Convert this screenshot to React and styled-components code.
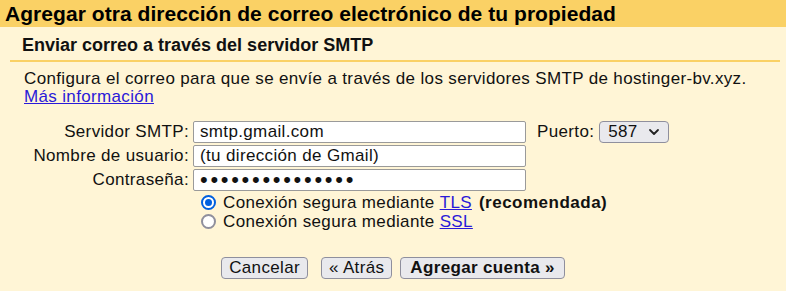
import React from "react"
import styled, { createGlobalStyle } from "styled-components"

const Global = createGlobalStyle`
  html, body {
    margin: 0;
    padding: 0;
    background: #fff5d6;
  }
  body {
    font-family: "Liberation Sans", Arial, sans-serif;
    color: #111;
  }
`

const Page = styled.div`
  width: 786px;
  height: 291px;
  background: #fff5d6;
  overflow: hidden;
  letter-spacing: 0.35px;
`
const TitleBar = styled.div`
  height: 27px;
  padding-left: 5px;
  background: #fad165;
  font-size: 21px;
  font-weight: bold;
  line-height: 27px;
  letter-spacing: 0.05px;
  color: #000;
  white-space: nowrap;
`
const SubTitle = styled.div`
  padding: 9px 0 0 22px;
  height: 24px;
  font-size: 18px;
  font-weight: bold;
  line-height: 18px;
  letter-spacing: 0;
`
const Divider = styled.div`
  height: 2px;
  margin: 0 6px 0 10px;
  background: #fad165;
`
const Intro = styled.p`
  margin: 8px 0 0 24px;
  font-size: 17px;
  line-height: 18px;
`
const Link = styled.a`
  color: #2a1ad8;
  text-decoration: underline;
  cursor: pointer;
`
const Form = styled.div`
  display: grid;
  grid-template-columns: 189px 333px auto;
  column-gap: 4px;
  row-gap: 2px;
  margin-top: 15px;
  font-size: 17px;
  align-items: center;
`
const Label = styled.label`
  text-align: right;
  white-space: nowrap;
  line-height: 22px;
`
const Input = styled.input`
  box-sizing: border-box;
  width: 333px;
  height: 22px;
  margin: 0;
  padding: 0 6px;
  border: 1px solid #9a9a9a;
  border-radius: 2px;
  background: #fff;
  font-family: inherit;
  font-size: ${(p) => (p.type === "password" ? "22px" : "17px")};
  color: #111;
  outline: none;
  letter-spacing: ${(p) => (p.type === "password" ? "2.7px" : "0.35px")};
`
const PortCell = styled.div`
  display: flex;
  align-items: center;
  gap: 5px;
  margin-left: 7px;
`
const Select = styled.div`
  box-sizing: border-box;
  display: flex;
  align-items: center;
  gap: 10px;
  width: 70px;
  height: 22px;
  padding: 0 8px;
  border: 1px solid #8f8f9d;
  border-radius: 4px;
  background: #e9e9ed;
  font-size: 17px;
`
const Radios = styled.div`
  grid-column: 2 / 4;
  margin: 0 0 0 8px;
  font-size: 17px;
`
const RadioRow = styled.div`
  display: flex;
  align-items: center;
  height: 19px;
  white-space: nowrap;
`
const Radio = styled.span`
  box-sizing: border-box;
  width: 15px;
  height: 15px;
  margin-right: 7px;
  border-radius: 50%;
  border: ${(p) => (p.checked ? "2px solid #0060df" : "2px solid #8f8f9d")};
  background: #fff;
  display: inline-flex;
  align-items: center;
  justify-content: center;
  &::after {
    content: "";
    display: ${(p) => (p.checked ? "block" : "none")};
    width: 7px;
    height: 7px;
    border-radius: 50%;
    background: #0060df;
  }
`
const Strong = styled.b`
  margin-left: 7px;
  letter-spacing: 0.5px;
`
const Buttons = styled.div`
  display: flex;
  justify-content: center;
  margin-top: 26px;
`
const Button = styled.button`
  box-sizing: border-box;
  height: 22px;
  margin: 0 ${(p) => p.$gap || 0}px 0 0;
  padding: 0 ${(p) => (p.$bold ? 9 : 7)}px;
  border: 1px solid #8f8f9d;
  border-radius: 4px;
  background: #e9e9ed;
  font-family: inherit;
  font-size: 17px;
  font-weight: ${(p) => (p.$bold ? "bold" : "normal")};
  letter-spacing: 0.35px;
  color: #111;
  line-height: 20px;
`

function Chevron() {
  return (
    <svg width="12" height="8" viewBox="0 0 12 8">
      <path d="M2 2 L6 6 L10 2" fill="none" stroke="#222" strokeWidth="1.8" strokeLinecap="round" strokeLinejoin="round" />
    </svg>
  )
}

export default function App() {
  return (
    <Page>
      <Global />
      <TitleBar>Agregar otra dirección de correo electrónico de tu propiedad</TitleBar>
      <SubTitle>Enviar correo a través del servidor SMTP</SubTitle>
      <Divider />
      <Intro>
        Configura el correo para que se envíe a través de los servidores SMTP de hostinger-bv.xyz.
        <br />
        <Link>Más información</Link>
      </Intro>
      <Form>
        <Label>Servidor SMTP:</Label>
        <Input defaultValue="smtp.gmail.com" />
        <PortCell>
          Puerto:
          <Select>
            587 <Chevron />
          </Select>
        </PortCell>
        <Label>Nombre de usuario:</Label>
        <Input defaultValue="(tu dirección de Gmail)" />
        <span />
        <Label>Contraseña:</Label>
        <Input type="password" defaultValue="aaaaaaaaaaaaaaa" />
        <span />
        <span />
        <Radios>
          <RadioRow>
            <Radio checked />
            Conexión segura mediante&nbsp;<Link>TLS</Link>
            <Strong>(recomendada)</Strong>
          </RadioRow>
          <RadioRow>
            <Radio />
            Conexión segura mediante&nbsp;<Link>SSL</Link>
          </RadioRow>
        </Radios>
      </Form>
      <Buttons>
        <Button $gap={13}>Cancelar</Button>
        <Button $gap={8}>« Atrás</Button>
        <Button $bold>Agregar cuenta »</Button>
      </Buttons>
    </Page>
  )
}
